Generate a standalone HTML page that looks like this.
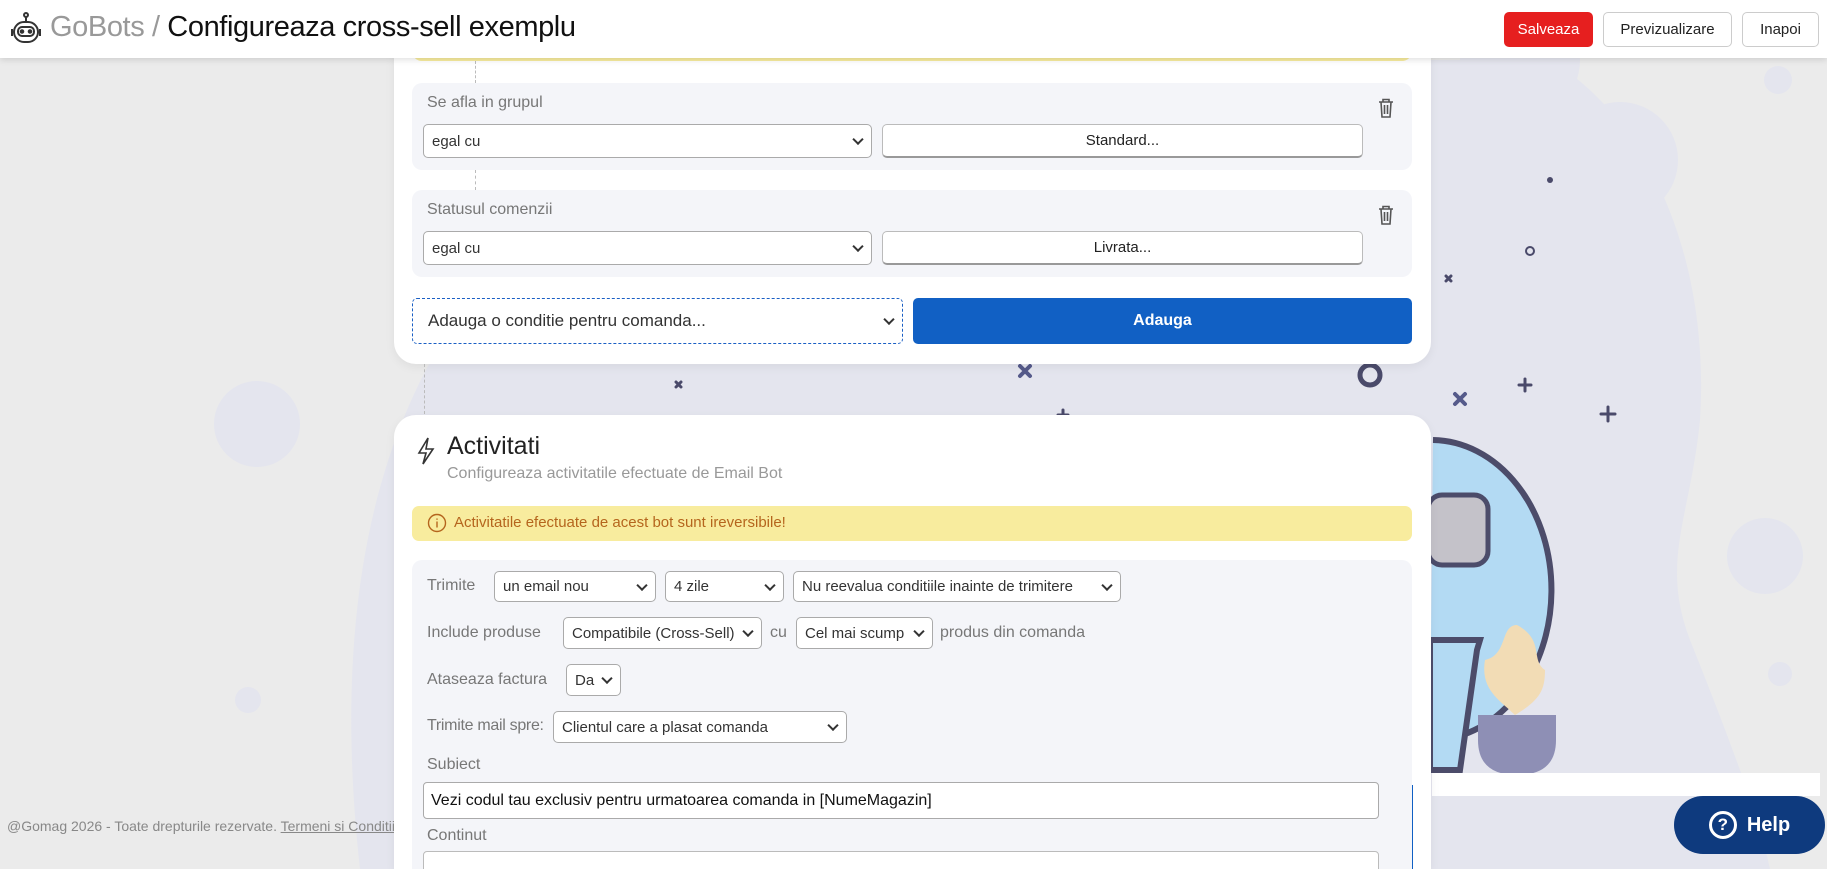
<!DOCTYPE html><html><head><meta charset="utf-8"><style>
*{box-sizing:border-box;margin:0;padding:0}
html{width:1827px;height:869px;overflow:hidden}
body{width:1827px;height:869px;overflow:hidden;background:#ebebeb;font-family:"Liberation Sans",sans-serif;position:relative}
.abs{position:absolute}
.hdr{left:0;top:0;width:1827px;height:58px;background:#fff;box-shadow:0 2px 6px rgba(0,0,0,.12);z-index:5}
.card{background:#fff;border-radius:22px;box-shadow:0 3px 10px rgba(0,0,0,.06)}
.box{background:#f4f5f9;border-radius:10px}
.sel{background:#fff;border:1px solid #aaa;border-radius:5px;font-size:15px;color:#333;padding-left:8px;display:flex;align-items:center;position:absolute;white-space:nowrap}
.sel:after{content:"";position:absolute;right:9px;top:50%;width:6px;height:6px;border-right:2px solid #333;border-bottom:2px solid #333;transform:translateY(-70%) rotate(45deg)}
.btn{position:absolute;display:flex;align-items:center;justify-content:center;font-size:15px;border-radius:5px}
.lbl{position:absolute;font-size:16px;color:#777;white-space:nowrap}
</style></head><body>
<svg class="abs" style="left:0;top:0" width="1827" height="869">
<path d="M360 869 C330 600 380 420 470 300 C560 170 700 90 900 60 L1550 60 C1650 120 1710 260 1700 420 C1690 520 1660 560 1690 640 C1730 740 1760 820 1770 869Z" fill="#e4e5ee"/>
<circle cx="1520" cy="60" r="60" fill="#e4e5ee"/><circle cx="1620" cy="160" r="58" fill="#e4e5ee"/>
<circle cx="1765" cy="556" r="38" fill="#e4e5ee"/><circle cx="1780" cy="674" r="12" fill="#e4e5ee"/>
<circle cx="1778" cy="80" r="14" fill="#e4e5ee"/><circle cx="257" cy="424" r="43" fill="#e4e5ee"/>
<circle cx="248" cy="700" r="13" fill="#e4e5ee"/>
<circle cx="1550" cy="180" r="3" fill="#4a4a6a"/><circle cx="1530" cy="251" r="4" fill="none" stroke="#4a4a6a" stroke-width="2"/>
<g stroke="#555a8a" stroke-width="4" stroke-linecap="round"><path d="M1020 366l10 10M1030 366l-10 10M1455 394l10 10M1465 394l-10 10"/></g>
<g stroke="#4a4a6a" stroke-width="3" stroke-linecap="round"><path d="M1525 379v12M1519 385h12M1608 407v14M1601 414h14M1063 410v10M1058 415h10M676 382l5 5M681 382l-5 5M1446 276l5 5M1451 276l-5 5"/></g>
<circle cx="1370" cy="375" r="10" fill="none" stroke="#4a4a6a" stroke-width="5"/>
<path d="M1433 440 A80 100 0 0 1 1430 740" fill="#b3daf3" stroke="#4c4c6a" stroke-width="6"/>
<rect x="1428" y="495" width="60" height="70" rx="14" fill="#c4c2c9" stroke="#4c4c6a" stroke-width="5"/>
<path d="M1430 640 L1480 640 Q1480 640 1477 650 L1460 770 L1430 770Z" fill="#b3daf3" stroke="#4c4c6a" stroke-width="6"/>
<path d="M1478 715 L1556 715 L1556 740 Q1556 775 1517 775 Q1478 775 1478 740Z" fill="#8e8fb5"/>
<path d="M1517 625 C1500 625 1508 655 1485 660 C1480 690 1500 700 1515 715 C1540 700 1545 690 1545 670 C1530 660 1545 640 1517 625Z" fill="#f2dcb5"/>
<rect x="1432" y="773" width="388" height="23" fill="#fff"/>
</svg>
<div class="abs hdr">
<svg class="abs" style="left:9px;top:12px" width="34" height="34" viewBox="0 0 34 34" fill="none" stroke="#333" stroke-width="2"><circle cx="17" cy="3" r="2"/><path d="M17 5v5"/><rect x="5" y="10" width="24" height="20" rx="10"/><rect x="9" y="15" width="16" height="9" rx="4"/><circle cx="13" cy="19.5" r="1.3" fill="#333"/><circle cx="21" cy="19.5" r="1.3" fill="#333"/><path d="M3 17v7M31 17v7"/></svg>
<div class="abs" style="left:50px;top:11px;font-size:29px;letter-spacing:-0.4px;color:#999;white-space:nowrap">GoBots / <span style="color:#111">Configureaza cross-sell exemplu</span></div>
<div class="btn" style="left:1504px;top:12px;width:89px;height:35px;background:#e61f1f;color:#fff">Salveaza</div>
<div class="btn" style="left:1603px;top:12px;width:129px;height:35px;border:1px solid #ccc;color:#222">Previzualizare</div>
<div class="btn" style="left:1742px;top:12px;width:77px;height:35px;border:1px solid #ccc;color:#222">Inapoi</div>
</div>
<div class="abs card" style="left:394px;top:20px;width:1037px;height:344px"></div>
<div class="abs" style="left:412px;top:40px;width:1000px;height:21px;background:#f8ec9e;border-radius:0 0 10px 10px"></div>
<div class="abs" style="left:475px;top:61px;height:22px;border-left:1px dashed #bbb"></div>
<div class="abs" style="left:475px;top:170px;height:20px;border-left:1px dashed #bbb"></div>
<div class="abs" style="left:424px;top:364px;height:50px;border-left:1px dashed #bbb"></div>
<div class="abs box" style="left:412px;top:83px;width:1000px;height:87px"></div>
<div class="lbl" style="left:427px;top:94px">Se afla in grupul</div>
<div class="sel" style="left:423px;top:124px;width:449px;height:34px">egal cu</div>
<div class="btn" style="left:882px;top:124px;width:481px;height:34px;background:#fff;border:1px solid #bbb;border-bottom:2px solid #999;color:#222">Standard...</div>
<div class="abs box" style="left:412px;top:190px;width:1000px;height:87px"></div>
<div class="lbl" style="left:427px;top:201px">Statusul comenzii</div>
<div class="sel" style="left:423px;top:231px;width:449px;height:34px">egal cu</div>
<div class="btn" style="left:882px;top:231px;width:481px;height:34px;background:#fff;border:1px solid #bbb;border-bottom:2px solid #999;color:#222">Livrata...</div>
<svg class="abs" style="left:1378px;top:98px" width="16" height="20" viewBox="0 0 16 20" fill="none" stroke="#555" stroke-width="1.6"><path d="M1 4h14M5 4V1.5h6V4M3 4l1 15h8l1-15M6.5 7v9M9.5 7v9"/></svg>
<svg class="abs" style="left:1378px;top:205px" width="16" height="20" viewBox="0 0 16 20" fill="none" stroke="#555" stroke-width="1.6"><path d="M1 4h14M5 4V1.5h6V4M3 4l1 15h8l1-15M6.5 7v9M9.5 7v9"/></svg>
<div class="sel" style="left:412px;top:298px;width:491px;height:46px;border:1px dashed #1a5fc4;font-size:17px;padding-left:15px">Adauga o conditie pentru comanda...</div>
<div class="btn" style="left:913px;top:298px;width:499px;height:46px;background:#1160c4;color:#fff;font-weight:bold;font-size:16px">Adauga</div>
<div class="abs card" style="left:394px;top:415px;width:1037px;height:454px;border-radius:22px 22px 0 0"></div>
<svg class="abs" style="left:417px;top:437px" width="18" height="28" viewBox="0 0 18 28" fill="none" stroke="#333" stroke-width="1.6"><path d="M11 1L2 16h7l-3 11 10-15h-7z"/></svg>
<div class="abs" style="left:447px;top:432px;font-size:25px;color:#222">Activitati</div>
<div class="abs" style="left:447px;top:465px;font-size:16px;color:#999">Configureaza activitatile efectuate de Email Bot</div>
<div class="abs" style="left:412px;top:506px;width:1000px;height:35px;background:#f8ec9e;border-radius:7px"></div>
<svg class="abs" style="left:427px;top:513px" width="20" height="20" viewBox="0 0 20 20" fill="none" stroke="#b5651d" stroke-width="1.4"><circle cx="10" cy="10" r="8.5"/><path d="M10 8.5v6M10 5.5v1.2"/></svg>
<div class="abs" style="left:454px;top:514px;font-size:15px;color:#b5651d">Activitatile efectuate de acest bot sunt ireversibile!</div>
<div class="abs box" style="left:412px;top:560px;width:1000px;height:320px"></div>
<div class="lbl" style="left:427px;top:577px">Trimite</div>
<div class="sel" style="left:494px;top:571px;width:162px;height:31px">un email nou</div>
<div class="sel" style="left:665px;top:571px;width:119px;height:31px">4 zile</div>
<div class="sel" style="left:793px;top:571px;width:328px;height:31px">Nu reevalua conditiile inainte de trimitere</div>
<div class="lbl" style="left:427px;top:624px">Include produse</div>
<div class="sel" style="left:563px;top:617px;width:199px;height:32px">Compatibile (Cross-Sell)</div>
<div class="lbl" style="left:770px;top:624px">cu</div>
<div class="sel" style="left:796px;top:617px;width:137px;height:32px">Cel mai scump</div>
<div class="lbl" style="left:940px;top:624px">produs din comanda</div>
<div class="lbl" style="left:427px;top:671px">Ataseaza factura</div>
<div class="sel" style="left:566px;top:664px;width:55px;height:32px">Da</div>
<div class="lbl" style="left:427px;top:717px;letter-spacing:-0.3px">Trimite mail spre:</div>
<div class="sel" style="left:553px;top:711px;width:294px;height:32px">Clientul care a plasat comanda</div>
<div class="lbl" style="left:427px;top:756px">Subiect</div>
<div class="abs" style="left:423px;top:782px;width:956px;height:37px;background:#fff;border:1px solid #aaa;border-radius:4px;font-size:16px;color:#111;padding:9px 7px">Vezi codul tau exclusiv pentru urmatoarea comanda in [NumeMagazin]</div>
<div class="lbl" style="left:427px;top:827px">Continut</div>
<div class="abs" style="left:423px;top:851px;width:956px;height:30px;background:#fff;border:1px solid #bbb;border-radius:4px"></div>
<div class="abs" style="left:1412px;top:785px;height:84px;border-left:1px solid #1160c4"></div>
<div class="abs" style="left:7px;top:818px;font-size:14px;color:#888;white-space:nowrap;width:387px;overflow:hidden">@Gomag 2026 - Toate drepturile rezervate. <u>Termeni si Conditii</u></div>
<div class="btn" style="left:1674px;top:796px;width:151px;height:58px;border-radius:29px;background:#0e3a7e;color:#fff;font-weight:bold;font-size:20px"><span style="display:inline-flex;width:28px;height:28px;border-radius:50%;border:3px solid #fff;align-items:center;justify-content:center;font-size:17px;margin-right:10px">?</span>Help</div>
</body></html>
